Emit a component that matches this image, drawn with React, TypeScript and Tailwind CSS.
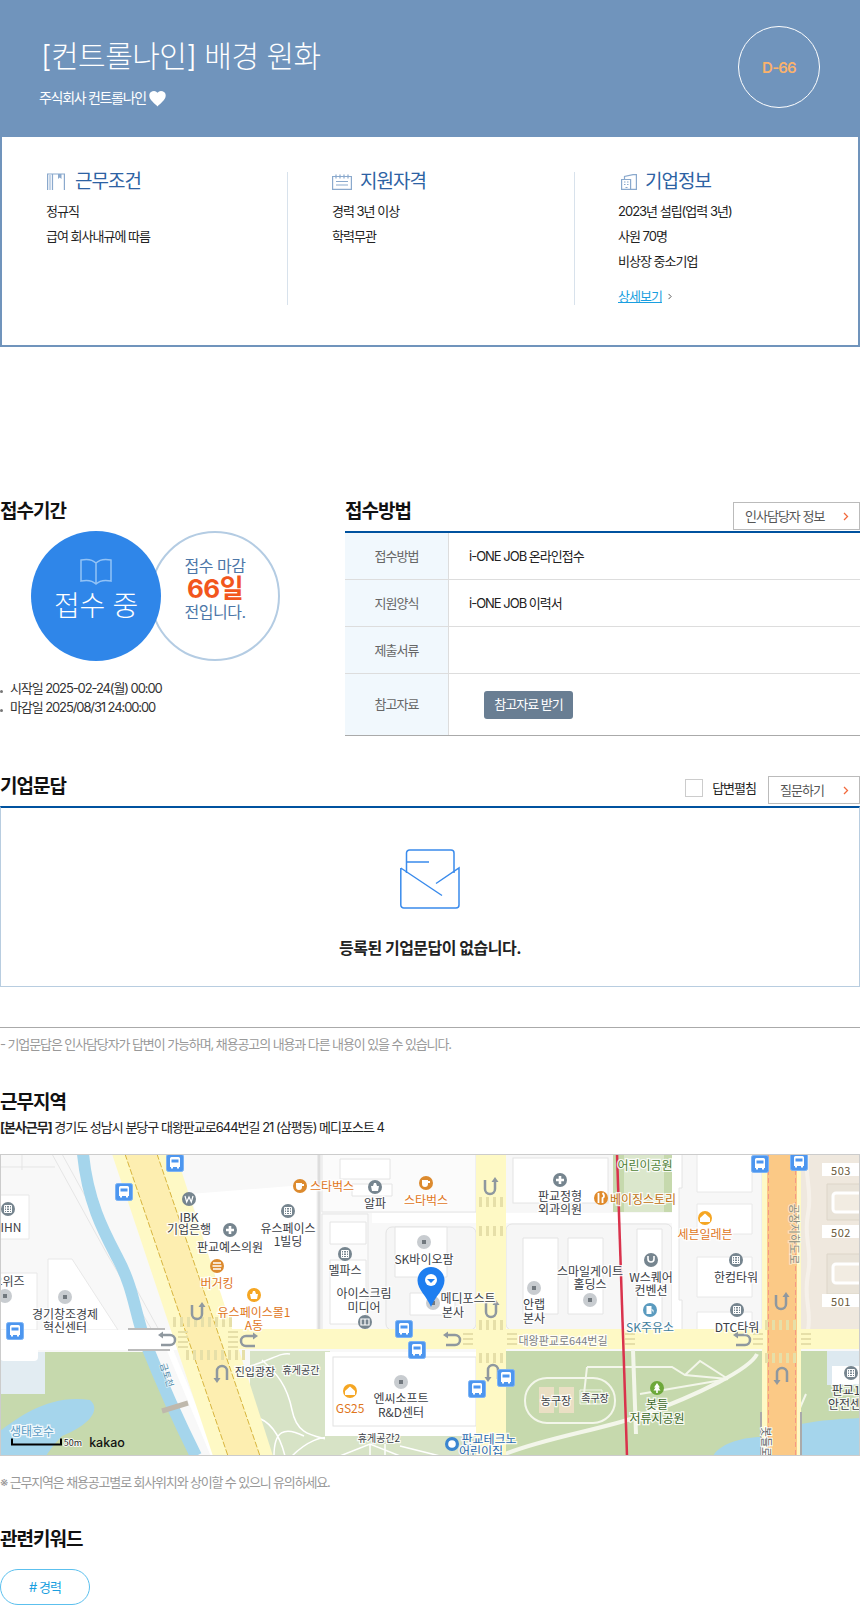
import React from 'react';

type Lb = [number, number, string, string?, number?];

const DARK = '#3b4046';
const ORANGE = '#e0761c';

const labels: Lb[] = [
  [11, 72, 'IHN'],
  [332, 31, '스타벅스', ORANGE],
  [189, 62, 'IBK'],
  [189, 74, '기업은행'],
  [230, 92, '판교예스의원'],
  [288, 73, '유스페이스'],
  [288, 86, '1빌딩'],
  [375, 48, '알파'],
  [426, 45, '스타벅스', ORANGE],
  [345, 115, '멜파스'],
  [364, 138, '아이스크림'],
  [364, 152, '미디어'],
  [424, 104, 'SK바이오팜'],
  [217, 128, '버거킹', ORANGE],
  [254, 157, '유스페이스몰1', ORANGE],
  [254, 170, 'A동', ORANGE],
  [65, 159, '경기창조경제'],
  [65, 172, '혁신센터'],
  [8, 126, '오위즈'],
  [255, 217, '진입광장', DARK, 11],
  [301, 215, '휴게공간', DARK, 10],
  [350, 253, 'GS25', ORANGE],
  [401, 243, '엔씨소프트'],
  [401, 257, 'R&D센터'],
  [379, 283, '휴게공간2', DARK, 10],
  [32, 276, '생태호수', '#5b9cc4'],
  [645, 10, '어린이공원', '#4f7f35'],
  [560, 41, '판교정형'],
  [560, 54, '외과의원'],
  [643, 44, '베이징스토리', '#c0700f'],
  [705, 79, '세븐일레븐', ORANGE],
  [468, 143, '메디포스트'],
  [453, 157, '본사'],
  [534, 149, '안랩'],
  [534, 163, '본사'],
  [590, 116, '스마일게이트'],
  [590, 129, '홀딩스'],
  [651, 122, 'W스퀘어'],
  [651, 135, '컨벤션'],
  [650, 172, 'SK주유소', '#3f7d9d'],
  [736, 122, '한컴타워'],
  [737, 172, 'DTC타워'],
  [563, 186, '대왕판교로644번길', '#7d8084', 11],
  [556, 246, '농구장', DARK, 11],
  [595, 243, '족구장', DARK, 10],
  [657, 249, '봇들', '#3f6a2a'],
  [657, 263, '저류지공원', '#3f6a2a'],
  [489, 284, '판교테크노', '#2a6ab0'],
  [481, 296, '어린이집', '#2a6ab0'],
  [846, 235, '판교1'],
  [850, 249, '안전센터'],
];

const buses = [
  [175, 9], [124, 38], [15, 177], [404, 175], [417, 196], [760, 10], [799, 8], [506, 224], [477, 235],
];

const greys = [
  [65, 143], [5, 142], [424, 88], [401, 228], [433, 149], [534, 134], [590, 146],
];

// color, x, y, glyph: b building / c plus / w won / s shop
const pois: [number, number, string, string][] = [
  [8, 55, '#76858f', 'b'], [189, 45, '#76858f', 'w'], [230, 76, '#76858f', 'c'], [288, 57, '#76858f', 'b'],
  [375, 33, '#76858f', 's'], [345, 100, '#76858f', 'b'], [365, 168, '#76858f', 'm'], [560, 26, '#76858f', 'c'],
  [651, 106, '#76858f', 'o'], [736, 106, '#76858f', 'b'], [737, 156, '#76858f', 'b'], [851, 219, '#76858f', 'b'],
  [300, 32, '#dc8a2e', 'f'], [426, 29, '#dc8a2e', 'f'], [217, 112, '#dc8a2e', 'e'], [254, 141, '#f5a623', 's'],
  [350, 237, '#f5a623', 'h'], [601, 44, '#e08a2a', 'r'], [705, 64, '#f5a623', 'h'], [650, 156, '#5b9bbf', 'g'],
  [657, 234, '#6ea83a', 't'], [452, 290, '#3a85d0', 'k'],
];

// x, y, rotation, mirror
const turns: [number, number, number, number][] = [
  [197, 158, 0, 1], [168, 186, -90, 1], [248, 187, 90, -1], [222, 219, 180, 1], [490, 33, 0, 1], [491, 156, 0, 1],
  [453, 186, -90, 1], [743, 186, -90, 1], [781, 148, 0, 1], [782, 221, 180, 1], [493, 218, 180, 1],
];

// horizontal zebra bands
const bands = [
  [479, 506, 48], [479, 506, 77], [479, 506, 171], [479, 506, 204], [173, 233, 168], [186, 248, 201], [765, 800, 171], [765, 800, 204],
];

function Glyph({ k }: { k: string }) {
  if (k === 'c') return <path d="M-1.3 -4h2.6v2.7H4v2.6H1.3V4h-2.6V1.3H-4v-2.6h2.7z" fill="#fff" />;
  if (k === 'b') return <path d="M-3.5 -3.5h7v7h-7zM-1.5 -3.5v7M1.5 -3.5v7M-3.5 -1h7M-3.5 1.5h7" stroke="#fff" strokeWidth="1" fill="none" />;
  if (k === 'w') return <path d="M-4 -3l1.7 6 2.3-5 2.3 5L4 -3" stroke="#fff" strokeWidth="1.2" fill="none" />;
  if (k === 's') return <path d="M-4 -1h8l-1 5h-6zM-2 -1l1-3h2l1 3" fill="#fff" />;
  if (k === 'm') return <path d="M-4 -3h8v6h-8zM0 -3v6" stroke="#fff" strokeWidth="1.2" fill="none" />;
  if (k === 'o') return <path d="M-3 -4v3a3 3 0 0 0 6 0v-3" stroke="#fff" strokeWidth="1.6" fill="none" />;
  if (k === 'f') return <path d="M-4 -3h6v4a3 3 0 0 1-6 0zM2 -2h2v2h-2" fill="#fff" />;
  if (k === 'e') return <path d="M-4 -3h8M-4.500 0h9M-4 3h8" stroke="#fff" strokeWidth="1.5" fill="none" />;
  if (k === 'h') return <path d="M0 -4.500L5 0v4H-5V0z" fill="#fff" />;
  if (k === 'r') return <path d="M-2.500 -5v10M1.500 -5c2 2 2 4 0 5v5" stroke="#fff" strokeWidth="1.8" fill="none" />;
  if (k === 'g') return <path d="M-3.500 -4h5v8h-5zM1.500 -1l2 1v3" fill="#fff" />;
  if (k === 't') return <path d="M0 -5l3 4.500h-1.500l2 3h-7l2-3H-3zM-.8 2.500h1.600V5h-1.600z" fill="#fff" />;
  return <circle r="3.800" fill="#fff" />;
}

function MapView() {
  return (
    <svg viewBox="0 0 860 302" className="block w-full h-[302px]" style={{ letterSpacing: 0 }}>
      <rect width="860" height="302" fill="#f8f8f8" />
      {/* blocks */}
      <path d="M190 40L316 30V175H230Z" fill="#fff" />
      <path d="M0 41h29v44H0zM0 119h37v57H0zM48 105h24l46 71H48z" fill="#fff" stroke="#e8e8e8" />
      <path d="M0 13h55M22 0v16M52 0l55 100 45 76M62 0l55 100 42 76" stroke="#e5e5e5" fill="none" />
      <path d="M319 0v176" stroke="#ddd" strokeWidth="3" />
      <path d="M322 60h46v116h-46zM322 0h154v58H322z" fill="#fbfbfb" stroke="#e5e5e5" />
      <path d="M340 5h50v20h-50zM352 30h40v12h-40zM330 68h36v22h-36zM330 106h36v64h-36z" fill="#fff" stroke="#e4e4e4" />
      <rect x="386" y="73" width="90" height="103" rx="6" fill="#f6f6f6" stroke="#e3e3e3" />
      <path d="M395 73h52v50h-52zM410 139h45v22h-45z" fill="#fff" stroke="#e4e4e4" />
      <rect x="506" y="0" width="107" height="58" fill="#f7f7f7" />
      <rect x="513" y="4" width="95" height="45" fill="#fff" stroke="#e4e4e4" />
      <path d="M372 59h388v10H372z" fill="#fff" />
      <rect x="506" y="70" width="166" height="106" rx="6" fill="#f6f6f6" stroke="#e3e3e3" />
      <path d="M523 84h35v76h-35zM568 84h35v76h-35zM637 75h25v95h-25z" fill="#fff" stroke="#e4e4e4" />
      <path d="M672 0h90v176h-90z" fill="#fff" />
      <path d="M682 0v34h-3v112h3v30h80V0" fill="#f7f7f7" stroke="#e4e4e4" />
      <path d="M697 0h55v38h-55zM697 50h55v30h-55zM697 103h55v40h-55zM697 158h55v18h-55z" fill="#fff" stroke="#e8e8e8" />
      {/* top park */}
      <rect x="613" y="0" width="59" height="58" fill="#c6d9ad" />
      <rect x="624" y="0" width="40" height="58" fill="#dbe7cc" />
      {/* right tan area */}
      <rect x="801" y="0" width="59" height="176" fill="#efe8de" />
      <path d="M808 0c-5 20 5 35 0 60s5 35 0 60 4 35 0 56" stroke="#f6f1ea" strokeWidth="4" fill="none" />
      <path d="M827 30h33v36h-33zM827 100h33v40h-33z" fill="#e9e3d8" stroke="#ddd6c9" />
      <path d="M860 39h-24a3 3 0 0 0-3 3v13a3 3 0 0 0 3 3h24M860 110h-24a3 3 0 0 0-3 3v13a3 3 0 0 0 3 3h24" fill="#f2ece2" stroke="#fff" strokeWidth="3" />
      <path d="M822 9h38v13h-38zM822 71h38v13h-38zM822 140h38v13h-38z" fill="#fff" />
      {/* greens */}
      <path d="M45 198H152L195 302H0V240H45Z" fill="#c6d9ad" />
      <path d="M0 198h45v42H0z" fill="#e2ecf2" />
      <path d="M0 277C20 262 50 240 90 246C102 256 88 272 62 282C54 290 50 296 46 302H0Z" fill="#a5d5ec" />
      <rect x="250" y="197" width="80" height="105" fill="#d7e3c6" />
      <path d="M250 212c20-5 30-14 40-12M262 206c15 14 25 25 30 50s20 25 38 30M274 302c0-25 10-30 30-20M292 302c15-15 30-20 38-18M250 262c20 2 30 20 35 40" stroke="#fff" strokeWidth="1.500" fill="none" />
      <path d="M325 198h151v84H325z" fill="#fff" />
      <rect x="333" y="203" width="143" height="69" fill="#fff" stroke="#e2e2e2" />
      <rect x="325" y="282" width="151" height="20" fill="#d7e3c6" />
      <path d="M340 302l30-12 30 12M370 290v12M385 290v12M400 292l40 10" stroke="#fff" strokeWidth="1.500" fill="none" />
      <rect x="506" y="197" width="256" height="105" fill="#c6d9ad" />
      <path d="M713 302c5-10 25-19 49-19v19z" fill="#a5d5ec" />
      <rect x="801" y="197" width="59" height="105" fill="#c6d9ad" />
      <path d="M827 197h33v34h-33z" fill="#dde9f0" />
      <path d="M832 212h28v18h-28z" fill="#fff" />
      <path d="M801 270c20-4 40-5 59-6v38h-59z" fill="#a5d5ec" />
      <rect x="525" y="224" width="90" height="45" rx="22" fill="none" stroke="#f3f6ea" strokeWidth="2" />
      <path d="M539 233h15v26h-15zM559 233h15v26h-15z" fill="#eadfc4" />
      <path d="M580 236h22v14h-22z" fill="none" stroke="#f3f6ea" />
      <path d="M633 196l3 84" stroke="#f3f6ea" strokeWidth="4" fill="none" />
      <path d="M503 301C540 285 600 276 640 262C700 240 750 215 757 200" stroke="#f3f6ea" strokeWidth="4" fill="none" />
      <path d="M587 213H672L685 221L728 225L700 207L685 221M587 213L584 240M640 240L728 225M780 300L806 240" stroke="#f3f6ea" strokeWidth="2" fill="none" />
      {/* river */}
      <path d="M83 0C88 50 105 80 118 105C134 135 135 160 146 190C160 225 180 270 196 302" stroke="#a5d5ec" strokeWidth="12" fill="none" />
      <path d="M170 196L214 302" stroke="#fff" strokeWidth="6" fill="none" />
      <path d="M162 257l26-8" stroke="#bfb8ac" strokeWidth="5" />
      {/* roads */}
      <path d="M0 176h180v20H0z" fill="#fff" />
      <path d="M128 175h37M128 196h42" stroke="#bbb" strokeWidth="2" />
      <path d="M0 195h38v8q0 4-4 4H4q-4 0-4-4z" fill="#fff" />
      <path d="M180 175h680v20H180z" fill="#fef9c5" />
      <path d="M476 0h30v302h-30z" fill="#fef9c5" />
      <path d="M112 0H176L273 302H213Z" fill="#fef9c5" />
      <path d="M125 0H157L260 302H228Z" fill="#fdeeb0" />
      <path d="M125 0L228 302M157 0L260 302" stroke="#d8b53e" strokeWidth="1" strokeDasharray="6 2" fill="none" />
      <path d="M762 0h39v302h-39z" fill="#fef9c5" />
      <path d="M767 0h30v302h-30z" fill="#fbc986" />
      <path d="M768.500 0v302M795.500 0v302" stroke="#f59a84" strokeWidth="1" strokeDasharray="5 3" />
      <path d="M761 258v44M801 258v44" stroke="#aaa" strokeWidth="2" />
      {bands.map(([a, b, y], i) => (
        <path key={i} d={`M${a} ${y}H${b}`} stroke="#e6dfa8" strokeWidth="10" strokeDasharray="3 4" />
      ))}
      <path d="M468 179v14M512 179v14M630 179v14M758 179v14M806 179v14M183 177v19M233 177v19" stroke="#e6dfa8" strokeWidth="10" strokeDasharray="2 3" />
      {/* subway */}
      <path d="M617 0L627 302" stroke="#d9324c" strokeWidth="2.500" />
      {turns.map(([x, y, r, m], i) => (
        <g key={i} transform={`translate(${x} ${y}) rotate(${r}) scale(${m} 1)`} fill="none" stroke="#8f989f" strokeWidth="2.500">
          <path d="M-5 -7v9a5 5 0 0 0 10 0v-8" />
          <path d="M1.500 -5L5 -10l3.500 5z" fill="#8f989f" stroke="none" />
        </g>
      ))}
      {/* pois */}
      {greys.map(([x, y], i) => (
        <g key={i} transform={`translate(${x} ${y})`}>
          <circle r="7" fill="#c8ccd0" />
          <rect x="-2" y="-2" width="4" height="4" fill="#71787e" />
        </g>
      ))}
      {pois.map(([x, y, c, k], i) => (
        <g key={i} transform={`translate(${x} ${y})`}>
          <circle r="7" fill={c} />
          <Glyph k={k} />
        </g>
      ))}
      {buses.map(([x, y], i) => (
        <g key={i} transform={`translate(${x} ${y})`}>
          <rect x="-8.500" y="-8.500" width="17" height="17" rx="2" fill="#4d96ef" stroke="#7db4f5" />
          <path d="M-5 -4.500a1.500 1.500 0 0 1 1.500-1.500h7a1.500 1.500 0 0 1 1.500 1.500V4h-1v1.500H2V4h-4v1.500h-2V4h-1z" fill="#fff" />
          <rect x="-3.500" y="-3.500" width="7" height="3" fill="#4d96ef" />
        </g>
      ))}
      {/* labels */}
      <g fontFamily="'Noto Sans CJK KR', sans-serif" textAnchor="middle" dominantBaseline="central">
        {labels.map(([x, y, t, c, s], i) => (
          <text key={i} x={x} y={y} fontSize={s ?? 12} fill={c ?? DARK} stroke="#fff" strokeWidth="2.500" strokeOpacity="0.85" paintOrder="stroke">
            {t}
          </text>
        ))}
        <text x="795" y="80" fontSize="11" fill="#8a8f80" transform="rotate(90 795 80)" stroke="#fff" strokeOpacity="0.5" strokeWidth="2" paintOrder="stroke">공장지하도로</text>
        <text x="767" y="288" fontSize="11" fill="#5a5f60" transform="rotate(90 767 288)" stroke="#fff" strokeWidth="2" paintOrder="stroke">봇들로</text>
        <text x="167" y="221" fontSize="9" fill="#4a86a8" transform="rotate(72 167 221)" stroke="#fff" strokeOpacity="0.6" strokeWidth="1.500" paintOrder="stroke">금토천</text>
        <text x="841" y="16" fontSize="11" fill="#6a5a3a" letterSpacing="0.500">503</text>
        <text x="841" y="78" fontSize="11" fill="#6a5a3a" letterSpacing="0.500">502</text>
        <text x="841" y="147" fontSize="11" fill="#6a5a3a" letterSpacing="0.500">501</text>
        <text x="73" y="288" fontSize="9" fill="#222" stroke="#fff" strokeWidth="1.500" paintOrder="stroke">50m</text>
        <text x="107" y="288" fontSize="12.500" fontWeight="500" fill="#111" fontFamily="Inter, sans-serif">kakao</text>
      </g>
      <path d="M12 284.500v6h49v-6" fill="none" stroke="#000" strokeWidth="2" />
      {/* marker */}
      <path d="M431 113a13.500 13.500 0 0 1 13.500 13.500c0 9-9.500 16-13.500 26.500c-4-10.500-13.500-17.500-13.500-26.500a13.500 13.500 0 0 1 13.500-13.500z" fill="#1e7ef0" />
      <circle cx="431" cy="126" r="6" fill="#fff" />
      <path d="M427 125h8l-4 4z" fill="#1e7ef0" />
      <rect x="0.500" y="0.500" width="859" height="301" fill="none" stroke="#ccc" />
    </svg>
  );
}

function Chevron({ className = 'text-[#f26a3d]' }: { className?: string }) {
  return (
    <svg width="6" height="9" viewBox="0 0 6 9" className={className}>
      <path d="M1 1l3.500 3.500L1 8" fill="none" stroke="currentColor" strokeWidth="1.300" />
    </svg>
  );
}

function BookIcon() {
  return (
    <svg width="18" height="18" viewBox="0 0 18 18" fill="none" stroke="#8aa9cd" strokeWidth="1.200">
      <path d="M.6 17V1h16.800v16M5.500 1v16" />
      <path d="M11 1h3.500v5L12.700 4.500 11 6z" fill="#8aa9cd" stroke="none" />
      <path d="M2.500 1v16M3.500 1v16" stroke="#c6d6e8" />
    </svg>
  );
}

function NoteIcon() {
  return (
    <svg width="20" height="16" viewBox="0 0 20 16" fill="none" stroke="#8aa9cd" strokeWidth="1.200">
      <path d="M.6 2.500h18.800V15.400H.6zM4 .5v4M8 .5v4M12 .5v4M16 .5v4M4 7.500h12M4 11h12" />
    </svg>
  );
}

function BuildingIcon() {
  return (
    <svg width="19" height="16" viewBox="0 0 19 16" fill="none" stroke="#8aa9cd" strokeWidth="1.200">
      <path d="M3.600 15.400V5.500h9v9.900M6.500 5.500V2.500L15 .6h3.400v14.800H3" />
      <path d="M6 8h1.500M9 8h1.500M6 10.500h1.500M9 10.500h1.500M7.500 13.500h2" />
    </svg>
  );
}

function InfoTitle({ icon, gap, children }: { icon: React.ReactNode; gap: string; children: React.ReactNode }) {
  return (
    <h3 className={`flex h-[20px] items-center ${gap} text-[19px] leading-[20px] tracking-[-1px] text-[#2d62a3]`}>
      {icon}
      {children}
    </h3>
  );
}

function Row({ label, h = 'h-[47px]', border = 'border-[#ddd]', children }: { label: string; h?: string; border?: string; children?: React.ReactNode }) {
  return (
    <div className={`flex ${h} border-b ${border}`}>
      <div className="flex w-[104px] items-center justify-center border-r border-[#ddd] bg-[#f1f8fd] text-[#666]">{label}</div>
      <div className="flex flex-1 items-center pl-[20px] text-[#222]">{children}</div>
    </div>
  );
}

function OutlineButton({ w, children }: { w: string; children: React.ReactNode }) {
  return (
    <button className={`mt-[3px] flex h-[28px] ${w} items-center justify-between border border-[#bbb] pl-[11px] pr-[10px] text-[13px] text-[#555]`}>
      {children}
      <Chevron />
    </button>
  );
}

export default function App() {
  return (
    <div className="w-[860px] bg-white pb-px font-['Inter','Noto_Sans_CJK_KR',sans-serif] text-[13px] leading-[25px] tracking-[-1px] text-[#222]">
      {/* header */}
      <header className="flex h-[137px] justify-between bg-[#7094bc] pl-[41px] pr-[40px] text-white">
        <div className="pt-[34px]">
          <h1 className="text-[30px] font-light leading-[44px] tracking-[-0.5px]">[컨트롤나인] 배경 원화</h1>
          <p className="mt-[8px] flex h-[24px] items-center gap-[3px] text-[14px] leading-[24px] tracking-[-1.3px] -ml-[2px]">
            주식회사 컨트롤나인
            <svg width="17" height="17" viewBox="0 0 17 16">
              <path d="M8.500 16C6 13 .3 9.500.3 5A4.600 4.600 0 0 1 8.500 2.200A4.600 4.600 0 0 1 16.700 5C16.700 9.500 11 13 8.500 16Z" fill="#fff" />
            </svg>
          </p>
        </div>
        <div className="mt-[26px] flex size-[82px] items-center justify-center rounded-full border border-white text-[15px] font-semibold tracking-[-0.8px] text-[#fbb26c]">
          D-66
        </div>
      </header>

      {/* summary card */}
      <section className="flex h-[210px] border-x-2 border-b-2 border-[#7094bc] pt-[35px]">
        <div className="h-[133px] w-[285px] pl-[45px]">
          <InfoTitle icon={<BookIcon />} gap="gap-[10px]">근무조건</InfoTitle>
          <ul className="-ml-px mt-[7px]">
            <li>정규직</li>
            <li>급여 회사내규에 따름</li>
          </ul>
        </div>
        <div className="h-[133px] w-[287px] border-l border-[#d8e2ec] pl-[44px]">
          <InfoTitle icon={<NoteIcon />} gap="gap-[8px]">지원자격</InfoTitle>
          <ul className="mt-[7px]">
            <li>경력 3년 이상</li>
            <li>학력무관</li>
          </ul>
        </div>
        <div className="h-[133px] flex-1 border-l border-[#d8e2ec] pl-[43px]">
          <InfoTitle icon={<BuildingIcon />} gap="gap-[8px]">기업정보</InfoTitle>
          <ul className="mt-[7px]">
            <li>2023년 설립(업력 3년)</li>
            <li>사원 70명</li>
            <li>비상장 중소기업</li>
          </ul>
          <a className="mt-[10px] flex items-center gap-[5px] text-[#1a9fe0]">
            <span className="underline">상세보기</span>
            <Chevron className="text-[#555] scale-75" />
          </a>
        </div>
      </section>

      {/* period + method */}
      <section className="mt-[152px] flex">
        <div className="w-[345px]">
          <h2 className="h-[32px] text-[19px] font-bold leading-[26px] tracking-[-1px] text-[#111]">접수기간</h2>
          <div className="flex pl-[31px]">
            <div className="z-10 flex size-[130px] flex-col items-center rounded-full bg-[#2f86e9] pt-[27px] text-white">
              <svg width="32" height="27" viewBox="0 0 32 27" fill="none" stroke="#93c3f6" strokeWidth="1.500">
                <path d="M16 5C12 1 6 1 1 2V23C6 22 12 22 16 26C20 22 26 22 31 23V2C26 1 20 1 16 5ZM16 5V26" />
              </svg>
              <span className="mt-[3px] text-[28px] font-light leading-[36px] tracking-[-0.3px]">접수 중</span>
            </div>
            <div className="-ml-[11px] flex size-[130px] flex-col items-center rounded-full border-2 border-[#b4cce3] pt-[22px] text-[16px] leading-[22px] tracking-[-0.5px] text-[#4d77a8]">
              <span>접수 마감</span>
              <strong className="text-[26px] font-bold leading-[24px] text-[#f2561d]">66일</strong>
              <span>전입니다.</span>
            </div>
          </div>
          <ul className="mt-[18px] leading-[18.500px] tracking-[-1.100px] text-[#333]">
            <li className="flex items-center">
              <span className="mr-[7px] mt-[7px] size-[3px] rounded-full bg-[#777]" />
              시작일 2025-02-24(월) 00:00
            </li>
            <li className="flex items-center">
              <span className="mr-[7px] mt-[7px] size-[3px] rounded-full bg-[#777]" />
              마감일 2025/08/31 24:00:00
            </li>
          </ul>
        </div>
        <div className="flex-1">
          <div className="flex h-[32px] items-start justify-between">
            <h2 className="text-[19px] font-bold leading-[26px] tracking-[-1px] text-[#111]">접수방법</h2>
            <OutlineButton w="w-[127px]">인사담당자 정보</OutlineButton>
          </div>
          <div className="border-t-2 border-[#00529f]">
            <Row label="접수방법">i-ONE JOB 온라인접수</Row>
            <Row label="지원양식">i-ONE JOB 이력서</Row>
            <Row label="제출서류" />
            <Row label="참고자료" h="h-[62px]" border="border-[#aaa]">
              <button className="ml-[15px] h-[28px] w-[89px] rounded-[3px] bg-[#697e93] text-[13px] text-white">참고자료 받기</button>
            </Row>
          </div>
        </div>
      </section>

      {/* qna */}
      <section className="mt-[37px]">
        <div className="flex h-[33px] items-start justify-between">
          <h2 className="text-[19px] font-bold leading-[28px] tracking-[-1px] text-[#111]">기업문답</h2>
          <div className="flex items-start">
            <label className="mt-[6px] flex h-[18px] items-center gap-[9px] text-[#222]">
              <span className="size-[18px] border border-[#ccc]" />
              답변펼침
            </label>
            <div className="ml-[12px]">
              <OutlineButton w="w-[92px]">질문하기</OutlineButton>
            </div>
          </div>
        </div>
        <div className="flex h-[181px] flex-col items-center border-x border-b border-t-2 border-[#b8cde0] border-t-[#00529f] pt-[41px]">
          <svg width="60" height="60" viewBox="0 0 60 60" fill="none" stroke="#3a8bec" strokeWidth="1.500">
            <path d="M.8 19V56a3 3 0 0 0 3 3H56a3 3 0 0 0 3-3V19L36 34.500M.8 19L42 46.500" />
            <path d="M6.500 24V4a3 3 0 0 1 3-3H51a3 3 0 0 1 3 3V24M6.500 13H29" />
          </svg>
          <p className="mt-[27px] text-[16px] font-bold leading-[24px] tracking-[-0.5px] text-[#222]">등록된 기업문답이 없습니다.</p>
        </div>
        <p className="mt-[40px] border-t border-[#aaa] pt-[6px] leading-[20px] tracking-[-1.100px] text-[#999]">
          - 기업문답은 인사담당자가 답변이 가능하며, 채용공고의 내용과 다른 내용이 있을 수 있습니다.
        </p>
      </section>

      {/* location */}
      <section className="mt-[37px]">
        <h2 className="text-[19px] font-bold leading-[24px] tracking-[-1px] text-[#111]">근무지역</h2>
        <p className="mt-[2px] leading-[20px]">
          <strong className="font-bold">[본사근무]</strong> 경기도 성남시 분당구 대왕판교로644번길 21 (삼평동) 메디포스트 4
        </p>
        <div className="mt-[17px]">
          <MapView />
        </div>
        <p className="mt-[16px] leading-[20px] tracking-[-1.160px] text-[#999]">※ 근무지역은 채용공고별로 회사위치와 상이할 수 있으니 유의하세요.</p>
      </section>

      {/* keywords */}
      <section className="mt-[36px]">
        <h2 className="text-[19px] font-bold leading-[24px] tracking-[-1px] text-[#111]">관련키워드</h2>
        <a className="mt-[17px] flex h-[36px] w-[90px] items-center justify-center rounded-full border border-[#5cc0ee] text-[#1a9fe0]">
          # 경력
        </a>
      </section>
    </div>
  );
}
